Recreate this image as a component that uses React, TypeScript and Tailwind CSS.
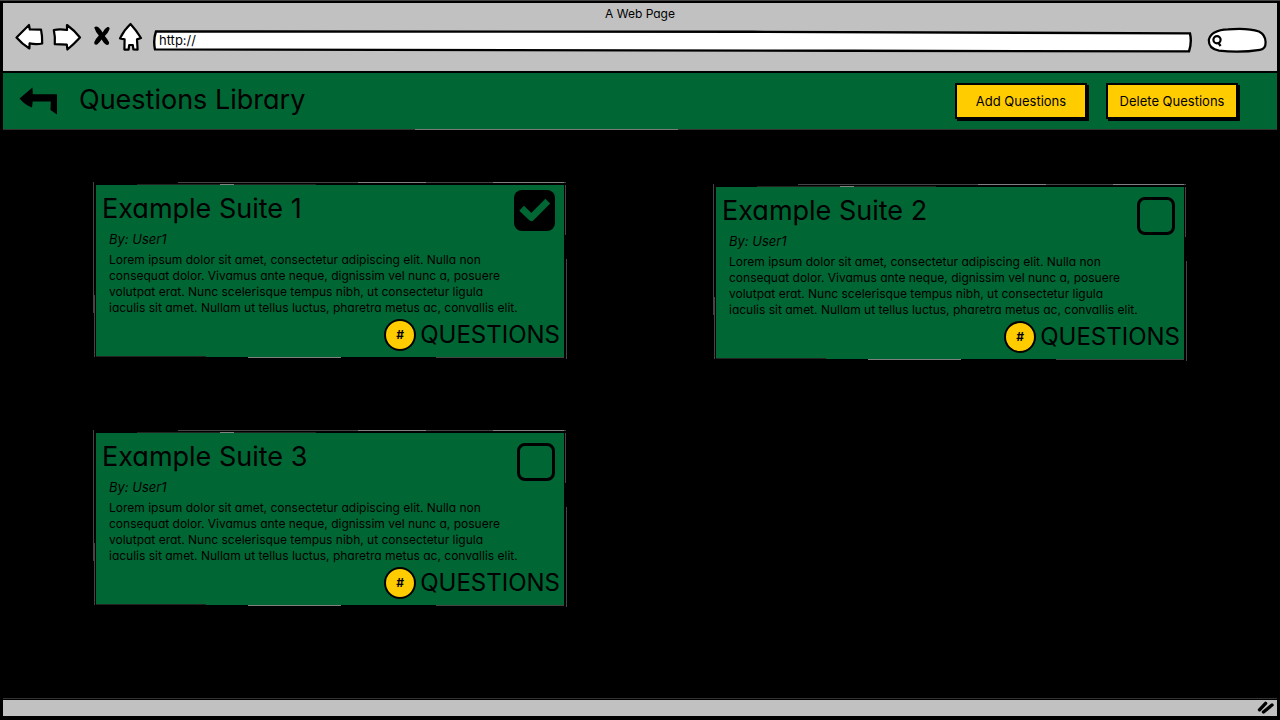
import { useId, useState } from "react";

type Suite = { title: string; author: string; offset: string };

const suites: Suite[] = [
  { title: "Example Suite 1", author: "User1", offset: "" },
  { title: "Example Suite 2", author: "User1", offset: "mt-0.5" },
  { title: "Example Suite 3", author: "User1", offset: "" },
];

const summary = [
  "Lorem ipsum dolor sit amet, consectetur adipiscing elit. Nulla non",
  "consequat dolor. Vivamus ante neque, dignissim vel nunc a, posuere",
  "volutpat erat. Nunc scelerisque tempus nibh, ut consectetur ligula",
  "iaculis sit amet. Nullam ut tellus luctus, pharetra metus ac, convallis elit.",
];

function NavIcons() {
  const outline = "block h-[30px] overflow-visible fill-white stroke-black";
  return (
    <nav aria-label="Browser" className="flex items-center">
      <button aria-label="Back" className="mr-2">
        <svg className={outline + " w-[29px]"} viewBox="0 0 29 30" strokeWidth="2.2" strokeLinejoin="round">
          <path d="M1.5 15.5 L14 3 L14.8 7.5 L26 7.6 Q27.4 14 27.2 21.5 Q21 22.6 14.6 21.4 L14.4 26.5 Q7 22 1.5 15.5Z" />
        </svg>
      </button>
      <button aria-label="Forward" className="mr-3">
        <svg className={outline + " w-[29px]"} viewBox="0 0 29 30" strokeWidth="2.2" strokeLinejoin="round">
          <path d="M1.8 8 Q8 6.8 15 8 L15 3 Q22 8 28 15.5 Q22 22 15.4 27.5 L14.8 22.6 L2.8 22.2 Q3.4 15 1.8 8Z" />
        </svg>
      </button>
      <button aria-label="Stop" className="mr-2">
        <svg className="block h-[30px] w-[18px]" viewBox="0 0 18 30">
          <path d="M1.2 5.6 Q3 3.4 5.4 5.2 Q7.6 7.2 9.6 10.4 Q11.6 6.4 14.4 5 Q17.2 4.6 16.4 7.6 Q15 11.4 11.8 14 Q14.4 17 16.2 20.4 Q16 23.6 13.2 22.8 Q10.4 21 8.6 17.6 Q6.6 20.6 4.2 22.6 Q1 23.4 1.2 20.2 Q2.6 17 5.8 13.6 Q2.4 9.6 1.2 5.6Z" />
        </svg>
      </button>
      <button aria-label="Home">
        <svg className={outline + " w-[23px]"} viewBox="0 0 23 30" strokeWidth="2.2" strokeLinejoin="round">
          <path d="M11.5 2 Q17 8 22 16 L18 17.4 L18.6 27.6 L14.4 27.4 L13.8 23 L10.2 23 L9.6 27.6 L5.4 27.6 L5.6 17.4 L1 16.4 Q5 8 11.5 2Z" />
        </svg>
      </button>
    </nav>
  );
}

function BrowserBar() {
  return (
    <header className="flex h-[70px] flex-col border-b-2 border-black bg-[#c1c1c1]">
      <p className="pt-[3px] text-center text-[12px] leading-4">A Web Page</p>
      <div className="flex items-start pl-3 pr-[11px]">
        <NavIcons />
        <div className="relative ml-[11px] mt-[7px] flex h-[24px] flex-1 items-center">
          <svg aria-hidden="true" className="absolute inset-0 size-full overflow-visible" viewBox="0 0 1040 24" preserveAspectRatio="none" fill="white" stroke="black" strokeWidth="2.4">
            <path vectorEffect="non-scaling-stroke" d="M3 2.4 L600 2.8 L1038 4.4 Q1040 13 1037 22.4 L700 21.8 L2 20.4 Q0 11 3 2.4Z" />
          </svg>
          <input aria-label="Address" defaultValue="http://" className="relative h-5 w-full bg-transparent pb-0.5 pl-1.5 pr-2 text-[13px] leading-4 outline-none" />
        </div>
        <div className="relative ml-4 mt-[5px] flex h-[26px] w-[58px] items-center">
          <svg aria-hidden="true" className="absolute inset-0 size-full overflow-visible" viewBox="0 0 58 26" fill="white" stroke="black" strokeWidth="2.2">
            <path d="M0.8 13 Q3 3 20 2.4 Q40 0.8 51 4.5 Q57.5 8 57.6 15 Q57.8 22 52 22.8 Q32 26 11 23.6 Q0.6 22 0.8 13Z" />
            <circle cx="9" cy="12.8" r="3.6" />
            <path d="M10 15.4 L12.6 19" />
          </svg>
          <input aria-label="Search" className="relative ml-4 h-5 w-8 bg-transparent text-[13px] outline-none" />
        </div>
      </div>
    </header>
  );
}

function ActionButton({ children }: { children: string }) {
  return (
    <button className="h-[36px] w-[132px] border-2 border-black bg-[#ffcc00] text-[13px] leading-4 shadow-[2px_2px_0_#000]">
      {children}
    </button>
  );
}

function Toolbar() {
  return (
    <div className="relative flex h-[56px] items-center bg-[#006633] pl-4 pr-[39px]">
      <svg aria-hidden="true" className="pointer-events-none absolute inset-0 size-full overflow-visible" viewBox="0 0 1274 56" preserveAspectRatio="none" fill="none" strokeWidth="1" shapeRendering="crispEdges">
        <path vectorEffect="non-scaling-stroke" stroke="#333333" d="M0 56.5 H412 M675 56.5 H1274" />
        <path vectorEffect="non-scaling-stroke" stroke="#7a7a7a" d="M412 56.5 H675" />
      </svg>
      <a href="#back" aria-label="Back">
        <svg className="block h-[28px] w-[39px]" viewBox="0 0 39 28">
          <path d="M0.5 11.5 L13.5 0.5 L13.8 7.2 L38 7.2 L38 27.5 L31.5 23 L31.8 14.4 L13.7 14.4 L13 20.6 Q6 18 0.5 11.5Z" />
        </svg>
      </a>
      <h1 className="ml-[21px] flex-1 pb-0.5 text-[27px] leading-8">Questions Library</h1>
      <div className="flex gap-[19px]">
        <ActionButton>Add Questions</ActionButton>
        <ActionButton>Delete Questions</ActionButton>
      </div>
    </div>
  );
}

function SuiteCard({ suite, initial }: { suite: Suite; initial: boolean }) {
  const [checked, setChecked] = useState(initial);
  const id = useId();
  return (
    <article className={"relative h-[172px] bg-[#006633] " + suite.offset}>
      <svg aria-hidden="true" className="pointer-events-none absolute inset-0 size-full overflow-visible" viewBox="0 0 468 172" preserveAspectRatio="none" fill="none" strokeWidth="1" shapeRendering="crispEdges">
        <path vectorEffect="non-scaling-stroke" stroke="#444444" d="M-2.5 -3 V128 M-1.5 110 V172 M82 -2.5 H470 M469.5 0 V50 M470.5 74 V174 M340 172.5 H468" />
        <path vectorEffect="non-scaling-stroke" stroke="#808080" d="M124 -0.5 H138 M262 -2.5 H330 M397 -2.5 H468 M152 172.5 H245" />
        <path vectorEffect="non-scaling-stroke" stroke="#222222" d="M41 -0.5 H124 M138 -0.5 H220 M0 171.5 H110" />
      </svg>
      <div className="flex h-[46px] items-start justify-between pl-1.5 pr-[9px]">
        <h2 className="pt-2 text-[27px] leading-8">
          <label htmlFor={id}>{suite.title}</label>
        </h2>
        <span className={checked ? "relative mt-[5px]" : "relative mt-2.5"}>
          <input
            id={id}
            type="checkbox"
            checked={checked}
            onChange={(e) => setChecked(e.target.checked)}
            className={
              checked
                ? "block size-[41px] appearance-none rounded-lg bg-black"
                : "block size-[38px] appearance-none rounded-lg border-3 border-black"
            }
          />
          {checked && (
            <svg className="pointer-events-none absolute inset-0 size-[41px]" viewBox="0 0 41 41" fill="none" stroke="#006633" strokeWidth="6.8" strokeLinejoin="round">
              <path d="M7.6 18.2 L17.4 27.6 L33.8 11.2" />
            </svg>
          )}
        </span>
      </div>
      <p className="pl-[13px] text-[13px] italic leading-4">By: {suite.author}</p>
      <p className="whitespace-nowrap pl-[13px] pt-[5px] text-[12px] leading-4">
        {summary.map((line) => (
          <span key={line} className="block">{line}</span>
        ))}
      </p>
      <div className="flex items-center justify-end gap-1 pr-1 pt-[3px]">
        <span className="flex size-8 items-center justify-center rounded-full border-2 border-black bg-[#ffcc00] text-[12px] font-bold">#</span>
        <span className="text-[24px] leading-8">QUESTIONS</span>
      </div>
    </article>
  );
}

export default function App() {
  return (
    <div className="flex min-h-screen flex-col border-t border-[#444444] bg-black px-[3px] pt-0.5 text-black [font-family:Inter,sans-serif] [font-feature-settings:'cv11']">
      <BrowserBar />
      <Toolbar />
      <main className="grid flex-1 grid-cols-2 content-start gap-x-[152px] gap-y-[74px] border-b border-[#333333] px-[93px] pt-[56px]">
        {suites.map((suite, i) => (
          <SuiteCard key={suite.title} suite={suite} initial={i === 0} />
        ))}
      </main>
      <footer className="mb-[4px] mt-px flex h-4 items-center justify-end bg-[#c1c1c1] pr-0.5">
        <svg className="block h-4 w-[18px]" viewBox="0 0 18 16" stroke="black" strokeWidth="3.4" strokeLinecap="round">
          <path d="M2.5 9.8 L8.6 3.4 M6.5 12 L15 5" />
        </svg>
      </footer>
    </div>
  );
}
